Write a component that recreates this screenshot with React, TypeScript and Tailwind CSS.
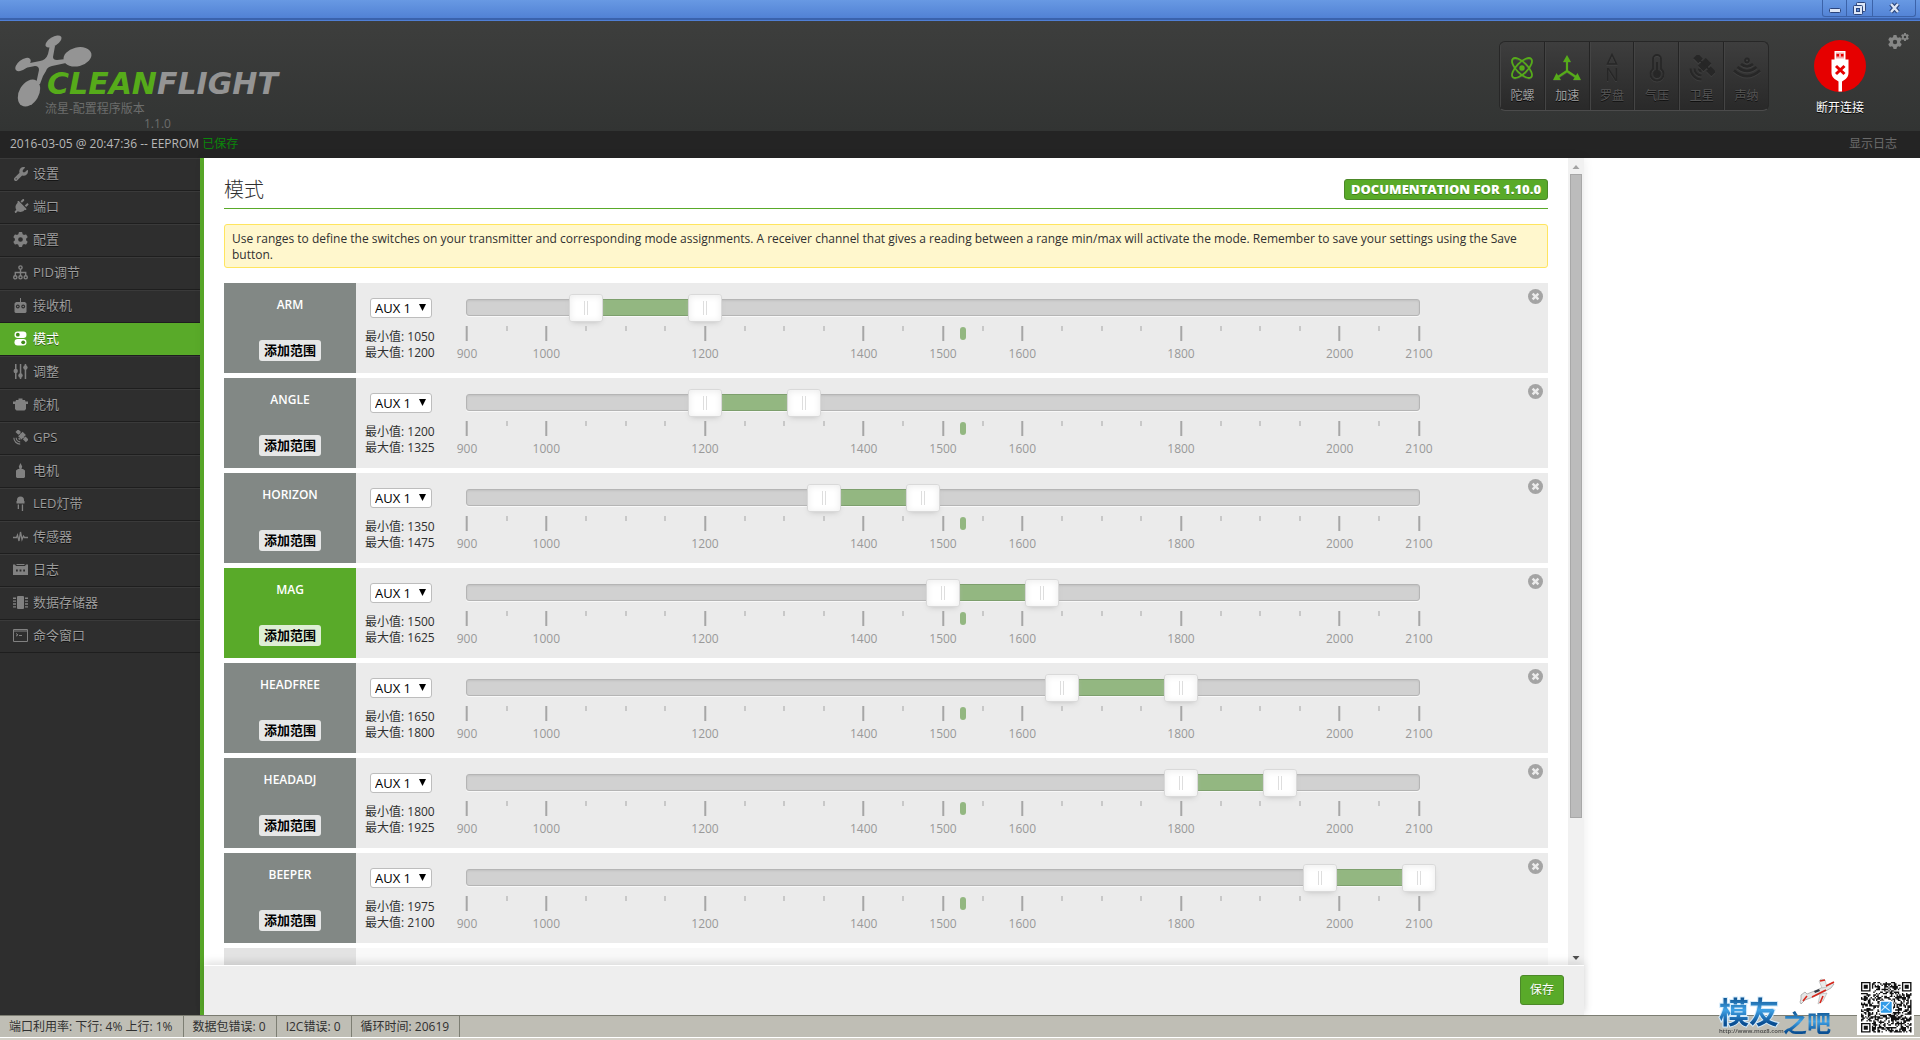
import { useState } from "react";
import type { ReactNode } from "react";
import { FaGear, FaPlug, FaWrench } from "react-icons/fa6";

const MIN = 900;
const MAX = 2100;
const CHANNEL = 1525;
const LABELS = [900, 1000, 1200, 1400, 1500, 1600, 1800, 2000, 2100];
const STEPS = Array.from({ length: 25 }, (_, i) => MIN + i * 50);

const percent = (value: number) => ((value - MIN) / (MAX - MIN)) * 100 + "%";

const modes = [
  { name: "ARM", min: 1050, max: 1200 },
  { name: "ANGLE", min: 1200, max: 1325 },
  { name: "HORIZON", min: 1350, max: 1475 },
  { name: "MAG", min: 1500, max: 1625 },
  { name: "HEADFREE", min: 1650, max: 1800 },
  { name: "HEADADJ", min: 1800, max: 1925 },
  { name: "BEEPER", min: 1975, max: 2100 },
];

const tabs = [
  { label: "设置", icon: <FaWrench size={14} /> },
  { label: "端口", icon: <FaPlug size={16} className="rotate-45" /> },
  { label: "配置", icon: <FaGear size={15} /> },
  { label: "PID调节", icon: <TreeIcon /> },
  { label: "接收机", icon: <ReceiverIcon /> },
  { label: "模式", icon: <SwitchesIcon /> },
  { label: "调整", icon: <SlidersIcon /> },
  { label: "舵机", icon: <ServoIcon /> },
  { label: "GPS", icon: <SatelliteIcon size={15} /> },
  { label: "电机", icon: <MotorIcon /> },
  { label: "LED灯带", icon: <LedIcon /> },
  { label: "传感器", icon: <PulseIcon /> },
  { label: "日志", icon: <LogIcon /> },
  { label: "数据存储器", icon: <ChipIcon /> },
  { label: "命令窗口", icon: <TerminalIcon /> },
];

const sensors = [
  { label: "陀螺", on: true, icon: <GyroIcon /> },
  { label: "加速", on: true, icon: <AccelIcon /> },
  { label: "罗盘", on: false, icon: <CompassIcon /> },
  { label: "气压", on: false, icon: <ThermometerIcon /> },
  { label: "卫星", on: false, icon: <SatelliteIcon size={26} /> },
  { label: "声纳", on: false, icon: <SonarIcon /> },
];

export default function App() {
  return (
    <div className="flex h-screen flex-col overflow-hidden bg-white font-['Open_Sans','Noto_Sans_CJK_SC',sans-serif] text-xs text-[#303030]">
      <TitleBar />
      <Header />
      <div className="flex h-[27px] shrink-0 items-center justify-between bg-[#242424] pr-[23px] pb-0.5 pl-2.5">
        <p className="text-[#b8b8b8]">
          2016-03-05 @ 20:47:36 -- EEPROM <span className="text-[#0a860a]">已保存</span>
        </p>
        <button className="text-[#6b6b6b]">显示日志</button>
      </div>
      <div className="flex min-h-0 flex-1">
        <Sidebar />
        <main className="flex w-full max-w-[1380px] min-w-0 flex-col shadow-[0_0_10px_rgba(0,0,0,0.08)]">
          <div className="flex min-h-0 flex-1">
            <ModesTab />
            <Scrollbar />
          </div>
          <div className="z-10 flex h-[50px] shrink-0 items-center justify-end border-t border-white bg-[#eeeeee] px-5 pb-px shadow-[0_-3px_8px_rgba(0,0,0,0.12)]">
            <button className="h-[30px] w-11 rounded-[3px] border border-[#4c8829] bg-[#59aa29] text-white [text-shadow:0_1px_rgba(0,0,0,0.25)]">
              保存
            </button>
          </div>
        </main>
      </div>
      <StatusBar />
      <Watermark />
    </div>
  );
}

function TitleBar() {
  return (
    <div className="flex h-[21px] shrink-0 justify-end border-b border-[#4f7fd6] bg-linear-to-b from-[#6899e3] to-[#4f7fd3] pr-1 shadow-[inset_0_-2px_#3a62ac]">
      <div className="flex h-[17px] divide-x divide-[#3c63a9] rounded-b-[3px] border border-t-0 border-[#3c63a9]">
        <button aria-label="Minimize" className="flex w-6 items-center justify-center">
          <svg width="12" height="12" viewBox="0 0 12 12">
            <rect x="0.5" y="6.5" width="11" height="4" rx="1" fill="#dce6f6" stroke="#2b457c" />
          </svg>
        </button>
        <button aria-label="Restore" className="flex w-[26px] items-center justify-center">
          <svg width="13" height="13" viewBox="0 0 13 13" fill="#dce6f6" stroke="#2b457c">
            <rect x="3.5" y="0.5" width="9" height="9" rx="1" />
            <rect x="0.5" y="3.5" width="9" height="9" rx="1" />
            <rect x="3.5" y="6.5" width="3" height="3" fill="#5b8bdb" />
          </svg>
        </button>
        <button aria-label="Close" className="flex w-[42px] items-center justify-center">
          <svg width="13" height="12" viewBox="0 0 13 12">
            <path d="M3 2l7 8M10 2l-7 8" stroke="#2b457c" strokeWidth="4.5" />
            <path d="M3 2l7 8M10 2l-7 8" stroke="#dce6f6" strokeWidth="2.4" />
          </svg>
        </button>
      </div>
    </div>
  );
}

function Header() {
  return (
    <header className="flex h-[110px] shrink-0 items-start justify-between bg-linear-to-b from-[#3d3e3d] to-[#323433]">
      <div className="pt-3.5 pl-3.5 text-[#6c6d6c]">
        <Logo />
        <p className="-mt-2 pl-[31px] leading-[15px]">流星-配置程序版本</p>
        <p className="pl-[130px] leading-[15px]">1.1.0</p>
      </div>
      <div className="flex items-start">
        <ul className="mt-5 flex h-[70px] w-[270px] divide-x divide-[#242424] overflow-hidden rounded-md border border-[#272727] border-b-[#4b4b4b] bg-linear-to-b from-[#3e3e3e] to-[#292929]">
          {sensors.map((sensor) => (
            <li
              key={sensor.label}
              className={
                sensor.on
                  ? "flex flex-1 flex-col items-center border-l border-l-[#444444] pt-[11px] text-[#56ab1a]"
                  : "flex flex-1 flex-col items-center border-l border-l-[#444444] pt-[11px] text-[#272727]"
              }
            >
              <span className="flex h-[29px] items-center drop-shadow-[0_1px_0_rgba(255,255,255,0.06)]">{sensor.icon}</span>
              <span
                className={
                  sensor.on
                    ? "mt-1.5 leading-4 text-[#a0a0a0] [text-shadow:0_1px_#000]"
                    : "mt-1.5 leading-4 text-[#555555] [text-shadow:0_1px_#101010]"
                }
              >
                {sensor.label}
              </span>
            </li>
          ))}
        </ul>
        <button className="mt-[19px] ml-[45px] flex flex-col items-center text-white [text-shadow:0_1px_#000]">
          <UsbIcon />
          <span className="mt-2 leading-4">断开连接</span>
        </button>
        <button aria-label="Options" className="mt-2.5 mr-[11px] ml-[22px] flex items-start text-[#868786]">
          <FaGear size={14} className="mt-1" />
          <FaGear size={8} className="-ml-px mt-0.5" />
        </button>
      </div>
    </header>
  );
}

function Sidebar() {
  return (
    <nav className="w-[204px] shrink-0 border-r-4 border-[#59aa29] bg-[#2e2e2e]">
      <ul>
        {tabs.map((tab) => (
          <li key={tab.label}>
            <a
              href="#"
              className={
                tab.label === "模式"
                  ? "flex h-[33px] items-center gap-[5px] border-t border-b border-t-[#59aa29] border-b-[#1e1e1e] bg-[#59aa29] pb-0.5 pl-[13px] text-[13px] text-white [text-shadow:0_1px_rgba(0,0,0,0.45)]"
                  : "flex h-[33px] items-center gap-[5px] border-t border-b border-t-[#3a3a3a] border-b-[#1e1e1e] pb-0.5 pl-[13px] text-[13px] text-[#9c9c9c] [text-shadow:0_1px_#101010]"
              }
            >
              <span
                className={
                  tab.label === "模式"
                    ? "flex w-[15px] justify-center text-white"
                    : "flex w-[15px] justify-center text-[#818181]"
                }
              >
                {tab.icon}
              </span>
              {tab.label}
            </a>
          </li>
        ))}
      </ul>
    </nav>
  );
}

function ModesTab() {
  return (
    <section className="min-w-0 flex-1 overflow-hidden px-5 pt-5">
      <div className="flex h-[31px] items-start justify-between border-b border-[#59aa29]">
        <h1 className="text-xl leading-6 font-light">模式</h1>
        <a
          href="#"
          className="mt-px flex h-[21px] w-[204px] items-center justify-center rounded-[3px] border border-[#4c8829] bg-[#59aa29] text-[13px] font-extrabold text-white [text-shadow:0_1px_rgba(0,0,0,0.25)]"
        >
          DOCUMENTATION FOR 1.10.0
        </a>
      </div>
      <p className="mt-[15px] rounded-[3px] border border-[#ffe55f] bg-[#fff7cd] px-[7px] pt-1.5 pb-1 leading-4">
        Use ranges to define the switches on your transmitter and corresponding mode assignments. A receiver channel
        that gives a reading between a range min/max will activate the mode. Remember to save your settings using the
        Save button.
      </p>
      <div className="mt-[15px] flex flex-col gap-[5px]">
        {modes.map((mode) => (
          <ModeRow key={mode.name} name={mode.name} min={mode.min} max={mode.max} />
        ))}
        <div className="flex h-[90px] bg-[#f9f9f9]">
          <div className="w-[132px] bg-[#e3e3e3]" />
        </div>
      </div>
    </section>
  );
}

interface ModeRowProps {
  name: string;
  min: number;
  max: number;
}

const handleClass =
  "pointer-events-none absolute -inset-x-[17px] -top-[6px] h-7 w-[calc(100%+34px)] appearance-none bg-transparent [&::-webkit-slider-thumb]:pointer-events-auto [&::-webkit-slider-thumb]:h-7 [&::-webkit-slider-thumb]:w-[34px] [&::-webkit-slider-thumb]:appearance-none [&::-webkit-slider-thumb]:rounded-[3px] [&::-webkit-slider-thumb]:border [&::-webkit-slider-thumb]:border-[#d9d9d9] [&::-webkit-slider-thumb]:[background:linear-gradient(#dedede,#dedede)_14px_50%/1px_14px_no-repeat,linear-gradient(#dedede,#dedede)_17px_50%/1px_14px_no-repeat,#fff] [&::-webkit-slider-thumb]:shadow-[inset_0_0_1px_#fff,inset_0_1px_7px_#ebebeb,0_3px_6px_-3px_#bbb]";

function ModeRow({ name, min, max }: ModeRowProps) {
  const [low, setLow] = useState(min);
  const [high, setHigh] = useState(max);
  const active = low <= CHANNEL && CHANNEL < high;

  return (
    <div className="flex h-[90px] bg-[#ebebeb]">
      <div
        className={
          active
            ? "flex w-[132px] shrink-0 flex-col items-center justify-between bg-[#59aa29] pt-3.5 pb-3"
            : "flex w-[132px] shrink-0 flex-col items-center justify-between bg-[#828885] pt-3.5 pb-3"
        }
      >
        <h2 className="leading-4 font-semibold text-white">{name}</h2>
        <button className="h-[21px] rounded-[3px] bg-white/80 px-[5px] pb-0.5 text-[13px] leading-[18px] font-bold text-black">
          添加范围
        </button>
      </div>
      <div className="flex w-[110px] shrink-0 flex-col pt-[15px] pl-[9px]">
        <div className="relative ml-[5px] w-[62px]">
          <select
            aria-label={name + " channel"}
            className="block h-5 w-full appearance-none rounded-[3px] border border-[#bdbdbd] bg-white pl-1 text-[13px] leading-4 text-black"
          >
            <option>AUX 1</option>
            <option>AUX 2</option>
            <option>AUX 3</option>
            <option>AUX 4</option>
          </select>
          <svg width="7" height="7" viewBox="0 0 7 7" className="pointer-events-none absolute top-1.5 right-1.5">
            <path d="M0 0h7L3.5 7z" />
          </svg>
        </div>
        <p className="mt-[11px] leading-4 whitespace-nowrap">最小值: {low}</p>
        <p className="leading-4 whitespace-nowrap">最大值: {high}</p>
      </div>
      <div className="min-w-0 flex-1 pt-4">
        <div className="relative h-[17px] rounded-[3px] border border-[#b5b5b5] bg-[#d1d1d1] shadow-[inset_0_1px_2px_rgba(0,0,0,0.08),0_1px_#f8f8f8]">
          <div
            className="absolute -inset-y-px border-y border-[#7d9f6d] bg-[#93b781]"
            style={{ left: percent(low), right: `calc(100% - ${percent(high)})` }}
          />
          <input
            type="range"
            aria-label={name + " min"}
            className={handleClass}
            min={MIN}
            max={MAX}
            step={25}
            value={low}
            onChange={(e) => setLow(Math.min(Number(e.target.value), high))}
          />
          <input
            type="range"
            aria-label={name + " max"}
            className={handleClass}
            min={MIN}
            max={MAX}
            step={25}
            value={high}
            onChange={(e) => setHigh(Math.max(Number(e.target.value), low))}
          />
        </div>
        <div className="relative mx-px mt-2.5 h-9">
          {STEPS.map((value) => (
            <div
              key={value}
              className="absolute top-0 flex -translate-x-1/2 flex-col items-center"
              style={{ left: percent(value) }}
            >
              {LABELS.includes(value) ? (
                <>
                  <span className="h-[15px] w-0.5 bg-[#a6a6a6]" />
                  <span className="mt-[5px] leading-4 text-[#999999]">{value}</span>
                </>
              ) : (
                <span className="h-[5px] w-0.5 bg-[#c8c8c8]" />
              )}
            </div>
          ))}
          <span
            className="absolute top-px h-[13px] w-1.5 -translate-x-1/2 rounded-[3px] bg-[#93b781]"
            style={{ left: percent(CHANNEL) }}
          />
        </div>
      </div>
      <div className="flex w-32 shrink-0 items-start justify-end pt-1.5 pr-[5px]">
        <button aria-label={"Remove " + name + " range"}>
          <svg width="15" height="15" viewBox="0 0 15 15">
            <circle cx="7.5" cy="7.5" r="7.5" fill="#a4a4a4" />
            <path d="M4.6 4.6l5.8 5.8M10.4 4.6l-5.8 5.8" stroke="#ebebeb" strokeWidth="2.4" />
          </svg>
        </button>
      </div>
    </div>
  );
}

function Scrollbar() {
  return (
    <div className="flex w-4 shrink-0 flex-col items-center bg-[#f1f1f1]">
      <svg width="16" height="16" viewBox="0 0 16 16" className="shrink-0" fill="#a3a3a3">
        <path d="M4.5 11L8 7l3.5 4z" />
      </svg>
      <div className="min-h-0 w-3 flex-[644] border border-[#a8a8a8] bg-[#bcbcbc]" />
      <div className="flex-[131]" />
      <svg width="16" height="16" viewBox="0 0 16 16" className="shrink-0" fill="#505050">
        <path d="M4.5 7h7L8 11z" />
      </svg>
    </div>
  );
}

function StatusBar() {
  return (
    <footer className="h-[25px] shrink-0 border-t border-[#7d7e73] bg-[#d4d1c8]">
      <ul className="flex h-[22px] border-b border-white bg-[#bfbeb5] leading-[21px] text-[#303030]">
        <StatusItem>端口利用率: 下行: 4% 上行: 1%</StatusItem>
        <StatusItem>数据包错误: 0</StatusItem>
        <StatusItem>I2C错误: 0</StatusItem>
        <StatusItem>循环时间: 20619</StatusItem>
      </ul>
    </footer>
  );
}

function StatusItem({ children }: { children: ReactNode }) {
  return <li className="border-r border-[#7d7e73] pr-2.5 pl-[9px]">{children}</li>;
}

function Logo() {
  return (
    <svg width="290" height="74" viewBox="14 35 290 74">
      <g fill="#949494">
        <ellipse cx="53.5" cy="41.5" rx="9" ry="4.5" transform="rotate(-32 53.5 41.5)" />
        <ellipse cx="77.5" cy="56.8" rx="14.2" ry="9.4" transform="rotate(-14 77.5 56.8)" />
        <ellipse cx="23" cy="64.5" rx="9" ry="4.8" transform="rotate(-38 23 64.5)" />
        <ellipse cx="29" cy="93" rx="14.5" ry="9.8" transform="rotate(-60 29 93)" />
        <path d="M50 45l5 1-2 11q0 3 4 3l9-1v4l-14 3q-5 1-6 5l-3 5-3 8h-4l3-14q0-4-4-4l-10 2v-4l15-3q6-1 8-7z" />
      </g>
      <text
        x="47"
        y="94"
        fontFamily="DejaVu Sans, sans-serif"
        fontSize="30"
        fontWeight="700"
        fontStyle="italic"
        fill="#949494"
      >
        <tspan fill="#56ab1a">CLEAN</tspan>FLIGHT
      </text>
    </svg>
  );
}

function UsbIcon() {
  return (
    <svg width="52" height="52" viewBox="0 0 52 52">
      <circle cx="26" cy="26" r="26" fill="#e60000" />
      <path d="M20.5 11h11v9h-11z" fill="#fff" />
      <path d="M22 12.5h8v6h-8z" fill="#e60000" opacity="0.35" />
      <path d="M22.5 14H25v2.500h-2.500zM27 14h2.500v2.500H27z" fill="#e60000" />
      <path d="M17.500 19.500h17V33q0 5-5 7.500l-1.500 1v10a26 26 0 0 1-3.500 0V41.500L23 40.500q-5.500-2.500-5.500-7.500z" fill="#fff" />
      <path d="M22 26l8.500 8M30.500 26L22 34" stroke="#e60000" strokeWidth="3" />
    </svg>
  );
}

function GyroIcon() {
  return (
    <svg width="24" height="24" viewBox="0 0 24 24" fill="none" stroke="currentColor" strokeWidth="1.8">
      <ellipse cx="12" cy="12" rx="13" ry="5.5" transform="rotate(45 12 12)" />
      <ellipse cx="12" cy="12" rx="13" ry="5.5" transform="rotate(-45 12 12)" />
      <circle cx="12" cy="12" r="1.8" fill="currentColor" />
    </svg>
  );
}

function AccelIcon() {
  return (
    <svg width="28" height="26" viewBox="0 0 28 26" fill="currentColor">
      <path d="M14 4v13M14 16l-9 6M14 16l9 6" stroke="currentColor" strokeWidth="2.2" fill="none" />
      <path d="M14 0l4 7h-8zM0 25l3.500-7 4.500 7zM28 25l-3.500-7-4.500 7z" />
    </svg>
  );
}

function CompassIcon() {
  return (
    <span className="flex flex-col items-center">
      <svg width="12" height="12" viewBox="0 0 12 12">
        <path d="M6 1.500l4.500 9.500h-9z" fill="none" stroke="currentColor" strokeWidth="1.5" />
      </svg>
      <span className="text-lg leading-[18px]">N</span>
    </span>
  );
}

function ThermometerIcon() {
  return (
    <svg width="16" height="28" viewBox="0 0 16 28" fill="none" stroke="currentColor" strokeWidth="1.8">
      <path d="M4 15V5a4 4 0 0 1 8 0v10a6.500 6.500 0 1 1-8 0z" />
      <path d="M8 8v10" strokeWidth="2" />
      <circle cx="8" cy="20" r="3" fill="currentColor" />
    </svg>
  );
}

function SatelliteIcon({ size }: { size: number }) {
  return (
    <svg width={size} height={size} viewBox="0 0 26 26" fill="currentColor">
      <g transform="rotate(45 16 10)">
        <rect x="3" y="7" width="7" height="6.5" />
        <rect x="11.5" y="4.5" width="8" height="11" />
        <rect x="21" y="7" width="7.5" height="6.5" />
        <rect x="9" y="9.5" width="14" height="1.5" />
      </g>
      <g fill="none" stroke="currentColor" strokeWidth="2">
        <path d="M1.500 13.500a11 11 0 0 0 11 11M5.500 13.500a7 7 0 0 0 7 7" />
      </g>
      <path d="M9 13.500a4 4 0 0 0 4 4l-1-3z" />
    </svg>
  );
}

function SonarIcon() {
  return (
    <svg width="28" height="22" viewBox="0 0 28 22" fill="none" stroke="currentColor" strokeWidth="2.6">
      <circle cx="14" cy="3.5" r="2" strokeWidth="1.8" />
      <path d="M8 7q6 5 12 0M4.500 10q9.500 8 19 0M1 13.500q13 11.500 26 0" />
    </svg>
  );
}

function TreeIcon() {
  return (
    <svg width="15" height="15" viewBox="0 0 15 15" fill="none" stroke="currentColor" strokeWidth="1.4">
      <circle cx="7.5" cy="2.5" r="1.6" />
      <circle cx="2.3" cy="12.3" r="1.6" />
      <circle cx="7.5" cy="12.3" r="1.6" />
      <circle cx="12.7" cy="12.3" r="1.6" />
      <path d="M7.500 4v7M2.300 11V7.500h10.400V11" />
    </svg>
  );
}

function ReceiverIcon() {
  return (
    <svg width="15" height="15" viewBox="0 0 15 15">
      <path d="M7 0h1v4h4l1.500 1.500V14l-1 1h-10l-1-1V5.500L3 4h4z" fill="currentColor" />
      <circle cx="4.800" cy="8.500" r="1.900" fill="#2e2e2e" />
      <circle cx="10.200" cy="8.500" r="1.900" fill="#2e2e2e" />
      <circle cx="4.800" cy="8.500" r="0.800" fill="currentColor" />
      <circle cx="10.200" cy="8.500" r="0.800" fill="currentColor" />
    </svg>
  );
}

function SwitchesIcon() {
  return (
    <svg width="13" height="15" viewBox="0 0 13 15" fill="currentColor">
      <rect x="0.5" y="0.5" width="12" height="6.5" rx="3.2" />
      <rect x="0.5" y="8" width="12" height="6.5" rx="3.2" />
      <circle cx="3.8" cy="3.7" r="1.9" fill="#3f8a17" />
      <circle cx="9.2" cy="11.3" r="1.9" fill="#3f8a17" />
    </svg>
  );
}

function SlidersIcon() {
  return (
    <svg width="15" height="15" viewBox="0 0 15 15" fill="currentColor">
      <path d="M2 0h1.500v15H2zM6.800 0h1.500v15H6.800zM11.700 0h1.500v15h-1.500z" />
      <circle cx="2.7" cy="7" r="2.2" />
      <circle cx="7.5" cy="11.5" r="2.2" />
      <circle cx="12.4" cy="3.5" r="2.2" />
    </svg>
  );
}

function ServoIcon() {
  return (
    <svg width="15" height="15" viewBox="0 0 15 15" fill="currentColor">
      <path d="M5.500 1.500h4V3H12l.5 1.500H15V7h-2v5l-1.500 1.500h-8L2 12V7H0V4.500h2.500L3 3h2.500z" />
    </svg>
  );
}

function MotorIcon() {
  return (
    <svg width="15" height="15" viewBox="0 0 15 15" fill="currentColor">
      <path d="M7.500 0l1.700 3.500L8.500 6h1.500l2 1.500V14l-1 1H4l-1-1V7.500L5 6h1.500l-.7-2.500z" />
    </svg>
  );
}

function LedIcon() {
  return (
    <svg width="15" height="15" viewBox="0 0 15 15" fill="currentColor">
      <path d="M4 5V4a3.500 3.500 0 0 1 7 0v1h.5v2.500h-8V5zM4.700 8.500H6V13H4.700zM8.800 8.500h1.300V15H8.800z" />
    </svg>
  );
}

function PulseIcon() {
  return (
    <svg width="15" height="15" viewBox="0 0 15 15" fill="none" stroke="currentColor" strokeWidth="1.3">
      <path d="M0 8.500h3.500L4.500 6l1.500 6 1.500-9 1.500 7.500L10.500 7l1 1.500H15" />
    </svg>
  );
}

function LogIcon() {
  return (
    <svg width="15" height="15" viewBox="0 0 15 15">
      <path d="M0 2.500h2l1 1.500h9l1-1.500h2V13H0z" fill="currentColor" />
      <path d="M3.500 2h8v1h-8z" fill="currentColor" />
      <path d="M3 7.500h1.800v2H3zM6.600 7.500h1.800v2H6.600zM10.200 7.500H12v2h-1.800z" fill="#2e2e2e" />
    </svg>
  );
}

function ChipIcon() {
  return (
    <svg width="15" height="15" viewBox="0 0 15 15" fill="currentColor">
      <rect x="4" y="1" width="7" height="13" rx="1" />
      <path d="M0 2.500h3v1.400H0zM0 5.400h3v1.400H0zM0 8.300h3v1.400H0zM0 11.200h3v1.400H0zM12 2.500h3v1.400h-3zM12 5.400h3v1.400h-3zM12 8.300h3v1.400h-3zM12 11.200h3v1.400h-3z" />
    </svg>
  );
}

function TerminalIcon() {
  return (
    <svg width="15" height="15" viewBox="0 0 15 15" fill="none" stroke="currentColor">
      <path d="M0.500 1.500h14v12H.5zM.5 3h14M3 5.500l2 1.300-2 1.300M6 7.500h3" />
    </svg>
  );
}

const QR_SIZE = 37;

// filled modules of the code, with the three corner finders kept regular
function qrPath() {
  let d = "";
  let seed = 20619;
  for (let y = 0; y < QR_SIZE; y++) {
    for (let x = 0; x < QR_SIZE; x++) {
      seed = (seed * 1103515 + 12345) % 2147483648;
      const fx = x > QR_SIZE - 9 ? QR_SIZE - 1 - x : x;
      const fy = y > QR_SIZE - 9 ? QR_SIZE - 1 - y : y;
      const corner = fx < 8 && fy < 8 && !(x > 20 && y > 20);
      const ring = Math.max(Math.abs(fx - 3), Math.abs(fy - 3));
      const dark = corner ? ring === 3 || ring < 2 : seed / 2147483648 > 0.45;
      if (dark) {
        d += `M${x} ${y}h1v1h-1z`;
      }
    }
  }
  return d;
}

function Watermark() {
  return (
    <div className="pointer-events-none fixed right-1.5 bottom-0 z-20 flex items-end">
      <svg width="140" height="64" viewBox="1717 976 140 64">
        <defs>
          <linearGradient id="mark" x1="0" y1="0" x2="0" y2="1">
            <stop offset="0.2" stopColor="#0c4f8c" />
            <stop offset="0.5" stopColor="#3fa2e6" />
            <stop offset="0.8" stopColor="#0a4f93" />
          </linearGradient>
        </defs>
        <g fontFamily="Noto Sans CJK SC, sans-serif" fontWeight="700" fill="url(#mark)">
          <text x="1719" y="1023" fontSize="30" stroke="#d4ebfb" strokeWidth="2" paintOrder="stroke">
            模友
          </text>
          <text x="1783" y="1032" fontSize="24">
            之吧
          </text>
        </g>
        <text x="1719" y="1033" fontFamily="Open Sans, sans-serif" fontSize="6" fontWeight="600" fill="#444444">
          http://www.moz8.com
        </text>
        <path d="M1801 995l4-3 2 2 10-4 6-3 9-4 2 1-3 4-9 5-9 4-8 3-4 4-1-2 1-3z" fill="#e6e6e6" stroke="#8a8a8a" strokeWidth="0.6" />
        <path d="M1819 981l2-2 4 1 2 7-5 1zM1820 994l7-1-4 8-5 3z" fill="#e9e9e9" stroke="#a3a3a3" strokeWidth="0.5" />
        <path d="M1820 981l5-1M1823 996l-3 7M1826 986l8-4M1803 1001l4-5M1812 997l14-7" stroke="#d8271c" strokeWidth="1.6" />
        <path d="M1814 991l5-2 1 2-5 2z" fill="#333b44" />
      </svg>
      <svg width="57" height="55" viewBox="0 0 57 55" className="mb-[5px]">
        <rect width="57" height="55" fill="#fff" />
        <g transform="translate(4 2) scale(1.365)">
          <path d={qrPath()} fill="#111111" />
          <rect x="14" y="14" width="9" height="9" rx="1" fill="#2f9be8" stroke="#fff" />
          <path d="M15 21l6-6M16 17l5 4" stroke="#d9effc" strokeWidth="0.8" />
        </g>
      </svg>
    </div>
  );
}
